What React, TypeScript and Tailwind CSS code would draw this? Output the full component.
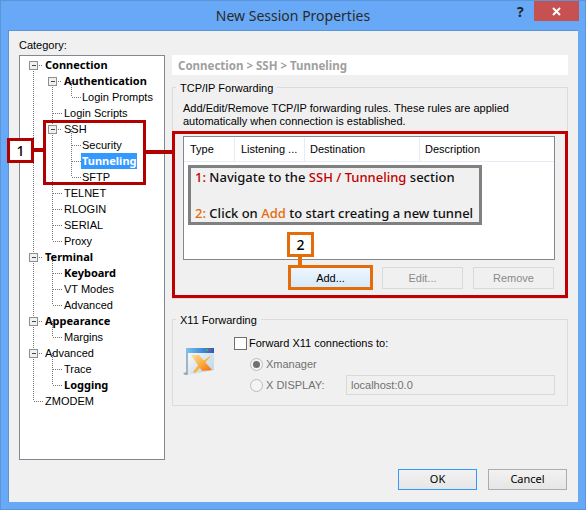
const NOTO = "font-['Noto_Sans',sans-serif]";

type Node = { label: string; level: 0 | 1 | 2; bold?: boolean; box?: boolean; selected?: boolean };

const nodes: Node[] = [
  { label: "Connection", level: 0, bold: true, box: true },
  { label: "Authentication", level: 1, bold: true, box: true },
  { label: "Login Prompts", level: 2 },
  { label: "Login Scripts", level: 1 },
  { label: "SSH", level: 1, box: true },
  { label: "Security", level: 2 },
  { label: "Tunneling", level: 2, bold: true, selected: true },
  { label: "SFTP", level: 2 },
  { label: "TELNET", level: 1 },
  { label: "RLOGIN", level: 1 },
  { label: "SERIAL", level: 1 },
  { label: "Proxy", level: 1 },
  { label: "Terminal", level: 0, bold: true, box: true },
  { label: "Keyboard", level: 1, bold: true },
  { label: "VT Modes", level: 1 },
  { label: "Advanced", level: 1 },
  { label: "Appearance", level: 0, bold: true, box: true },
  { label: "Margins", level: 1 },
  { label: "Advanced", level: 0, box: true },
  { label: "Trace", level: 1 },
  { label: "Logging", level: 1, bold: true },
  { label: "ZMODEM", level: 0 },
];

// dotted guide lines of the tree, drawn in panel coordinates
function TreeLines() {
  const v: [number, number, number][] = [
    [13, 9, 345],
    [32, 25, 185],
    [51, 25, 41],
    [51, 73, 121],
    [32, 201, 249],
    [32, 265, 281],
    [32, 297, 329],
  ];
  const rows = nodes.map((n, i) => ({ x: [13, 32, 51][n.level], y: 9 + i * 16, n }));
  return (
    <svg className="absolute left-0 top-0" width="144" height="402" shapeRendering="crispEdges">
      {v.map(([x, a, b], i) => (
        <line key={i} x1={x + 0.5} x2={x + 0.5} y1={a} y2={b} stroke="#777" strokeDasharray="1 1" />
      ))}
      {rows.map((r, i) => (
        <line key={i} x1={r.x + (r.n.box ? 6 : 1)} x2={r.x + 10} y1={r.y + 0.5} y2={r.y + 0.5} stroke="#777" strokeDasharray="1 1" />
      ))}
      {rows.filter((r) => r.n.box).map((r, i) => (
        <g key={i}>
          <rect x={r.x - 3.5} y={r.y - 3.5} width="8" height="8" fill="#f0f0f0" stroke="#8e8f8f" />
          <line x1={r.x - 1} x2={r.x + 3} y1={r.y + 0.5} y2={r.y + 0.5} stroke="#444" />
        </g>
      ))}
    </svg>
  );
}

function Tree() {
  return (
    <div className="relative w-[146px] h-[405px] border border-[#828790] bg-white pt-[1px] overflow-hidden">
      <TreeLines />
      {nodes.map((n, i) => (
        <div
          key={i}
          className={
            "relative h-4 flex items-center " +
            (n.level === 0 ? "pl-[24px]" : n.level === 1 ? "pl-[43px]" : "pl-[61px]")
          }
        >
          <span
            className={
              "leading-4 px-[1px] whitespace-nowrap " +
              (n.bold ? NOTO + " font-bold " : "") +
              (n.selected ? "bg-[#3399ff] text-white" : "text-black")
            }
          >
            {n.label}
          </span>
        </div>
      ))}
    </div>
  );
}

function Group({ title, className, children }: { title: string; className: string; children: React.ReactNode }) {
  return (
    <div className={"relative border border-[#dcdcdc] " + className}>
      <span className="absolute -top-[8px] left-[3px] bg-[#f0f0f0] px-1 leading-4 whitespace-nowrap">{title}</span>
      {children}
    </div>
  );
}

function XIcon() {
  return (
    <svg width="32" height="30" viewBox="0 0 32 30">
      <defs>
        <linearGradient id="pg" x1="0" y1="0" x2="1" y2="1">
          <stop offset="0" stopColor="#ffffff" />
          <stop offset="1" stopColor="#b9d2e4" />
        </linearGradient>
        <linearGradient id="tb" x1="0" y1="0" x2="1" y2="0">
          <stop offset="0" stopColor="#7cc4ee" />
          <stop offset="1" stopColor="#1c5fc4" />
        </linearGradient>
        <linearGradient id="a1" x1="0" y1="0" x2="1" y2="1">
          <stop offset="0" stopColor="#fde0a0" />
          <stop offset="0.5" stopColor="#fbb040" />
          <stop offset="1" stopColor="#f56a0a" />
        </linearGradient>
      </defs>
      <path d="M3 2h28v22L5 29z" fill="url(#pg)" />
      <path d="M3 2v26l2 1V2z" fill="#9fb4c6" />
      <path d="M3 2h28v5H3z" fill="url(#tb)" />
      <rect x="23" y="3" width="2" height="2" fill="#3fb24f" />
      <rect x="26" y="3" width="2" height="2" fill="#e0402a" />
      <path d="M0 27l4-1v3l-2 0z" fill="#9aa8b4" />
      <path d="M29 9L20 19 12 27 10 26 17 17z" fill="#fbb040" />
      <path d="M8 9h8l13 15-10 1z" fill="url(#a1)" />
    </svg>
  );
}

function Win7Button({ children, className }: { children: React.ReactNode; className: string }) {
  return <div className={"flex items-center justify-center " + className}>{children}</div>;
}

export default function App() {
  return (
    <div className="relative w-[586px] h-[510px] overflow-hidden bg-[#67a9f6] border border-[#5c94d8] text-[11px] text-black font-['Liberation_Sans',sans-serif]">
      {/* title bar */}
      <div className={"relative h-[29px] flex items-center justify-center text-[14px] text-[#2a2a2a] " + NOTO}>
        New Session Properties
        <span className="absolute left-[516px] top-[1px] text-[14px] font-bold leading-5 text-[#222]">?</span>
        <div className="absolute left-[533px] top-0 w-[45px] h-5 bg-[#c75050] flex items-center justify-center">
          <svg width="9" height="9" viewBox="0 0 9 9">
            <path d="M1 1l7 7M8 1l-7 7" stroke="#fff" strokeWidth="2" />
          </svg>
        </div>
      </div>

      {/* client area */}
      <div className="mx-[7px] h-[472px] w-[570px] border-l border-t border-[#5c94d8] bg-[#f0f0f0] pl-[10px] pt-[6px]">
        <div className="leading-4 h-[18px]">Category:</div>
        <div className="flex">
          <Tree />
          <div className="ml-[7px] w-[396px]">
            <div className={"h-5 bg-white pl-[6px] pt-[1px] flex items-center text-[11.5px] font-bold text-[#a0a0a0] " + NOTO}>
              Connection &gt; SSH &gt; Tunneling
            </div>
            <Group title="TCP/IP Forwarding" className="mt-3 h-[212px] pl-[10px] pr-[12px] pt-[14px]">
              <div className="leading-[13px] whitespace-nowrap">Add/Edit/Remove TCP/IP forwarding rules. These rules are applied</div>
              <div className="leading-[13px] whitespace-nowrap">automatically when connection is established.</div>
              <div className="mt-[8px] h-[124px] border border-[#828790] bg-white">
                <div className="flex h-[25px] pt-[1px] border-b border-[#e5ecf5]">
                  <div className="w-[51px] pl-[6px] border-r border-[#e5ecf5] flex items-center">Type</div>
                  <div className="w-[70px] pl-[6px] border-r border-[#e5ecf5] flex items-center">Listening ...</div>
                  <div className="w-[115px] pl-[5px] border-r border-[#e5ecf5] flex items-center">Destination</div>
                  <div className="flex-1 pl-[5px] flex items-center">Description</div>
                </div>
              </div>
              <div className="mt-[7px] flex justify-end gap-[10px] pr-[1px]">
                <Win7Button className="w-[83px] h-[22px] border border-[#c0c0c0] bg-gradient-to-b from-[#eef6fd] to-[#d5e8f9]">Add...</Win7Button>
                <Win7Button className="w-[81px] h-[22px] border border-[#d9d9d9] text-[#8a8a8a]">Edit...</Win7Button>
                <Win7Button className="w-[81px] h-[22px] border border-[#d9d9d9] text-[#8a8a8a]">Remove</Win7Button>
              </div>
            </Group>
            <Group title="X11 Forwarding" className="mt-[20px] h-[87px] pl-[10px] pt-[17px] flex">
              <div className="pt-[9px]">
                <XIcon />
              </div>
              <div className="ml-[19px]">
                <div className="flex items-center h-[13px]">
                  <div className="w-[13px] h-[13px] border border-[#707070] bg-white mr-[2px]" />
                  <span className="whitespace-nowrap">Forward X11 connections to:</span>
                </div>
                <div className="mt-[8px] ml-[16px] flex items-center h-[13px] text-[#707070]">
                  <div className="w-[13px] h-[13px] rounded-full border border-[#bcbcbc] bg-[#f4f4f4] flex items-center justify-center mr-[3px]">
                    <div className="w-[7px] h-[7px] rounded-full bg-[#707070]" />
                  </div>
                  Xmanager
                </div>
                <div className="mt-[4px] ml-[16px] flex items-center text-[#707070]">
                  <div className="w-[13px] h-[13px] rounded-full border border-[#bcbcbc] bg-[#f4f4f4] mr-[3px]" />
                  <span className="w-[80px]">X DISPLAY:</span>
                  <div className="w-[209px] h-[20px] border border-[#d9d9d9] pl-[4px] flex items-center">localhost:0.0</div>
                </div>
              </div>
            </Group>
          </div>
        </div>
        <div className={"mt-[9px] flex justify-end gap-[11px] pr-[11px] " + NOTO}>
          <Win7Button className="w-[79px] h-[21px] border border-[#3399ff] bg-gradient-to-b from-[#f2f2f2] to-[#e6e6e6]">OK</Win7Button>
          <Win7Button className="w-[79px] h-[21px] border border-[#acacac] bg-gradient-to-b from-[#f2f2f2] to-[#e6e6e6]">Cancel</Win7Button>
        </div>
      </div>

      {/* annotations laid over the dialog */}
      <div className={"absolute left-[6px] top-[137px] w-[27px] h-[25px] border-[3px] border-[#b00000] bg-white flex items-center justify-center text-[14px] font-medium " + NOTO}>1</div>
      <div className="absolute left-[32px] top-[147px] w-[11px] h-[4px] bg-[#b00000]" />
      <div className="absolute left-[42px] top-[119px] w-[103px] h-[65px] border-[3px] border-[#b00000]" />
      <div className="absolute left-[145px] top-[149px] w-[27px] h-[4px] bg-[#b00000]" />
      <div className="absolute left-[171px] top-[130px] w-[396px] h-[167px] border-[3px] border-[#c00000]" />
      <div className={"absolute left-[187px] top-[164px] w-[294px] h-[60px] border-[3px] border-[#808080] bg-[#f0f0f0] pl-[4px] text-[13px] font-medium leading-[18px] text-[#111] whitespace-nowrap " + NOTO}>
        <div><span className="text-[#c00000]">1:</span> Navigate to the <span className="text-[#c00000]">SSH / Tunneling</span> section</div>
        <div className="mt-[18px]"><span className="text-[#e46c0a]">2:</span> Click on <span className="text-[#e46c0a]">Add</span> to start creating a new tunnel</div>
      </div>
      <div className={"absolute left-[286px] top-[231px] w-[27px] h-[25px] border-[3px] border-[#e46c0a] bg-white flex items-center justify-center text-[14px] font-medium " + NOTO}>2</div>
      <div className="absolute left-[297px] top-[255px] w-[4px] h-[10px] bg-[#e46c0a]" />
      <div className="absolute left-[287px] top-[264px] w-[85px] h-[25px] border-[3px] border-[#e46c0a]" />
    </div>
  );
}
